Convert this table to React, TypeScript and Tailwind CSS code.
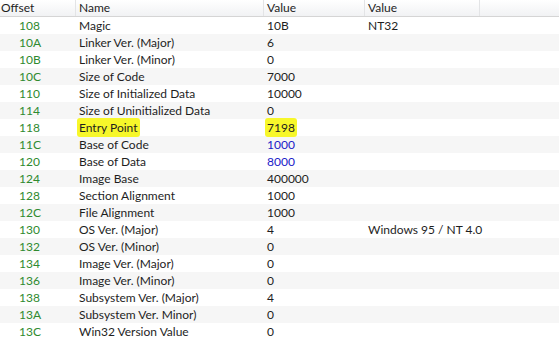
import React from "react";

type Row = { off: string; name: string; value: string; extra?: string; blue?: boolean; mark?: boolean };

const rows: Row[] = [
  { off: "108", name: "Magic", value: "10B", extra: "NT32" },
  { off: "10A", name: "Linker Ver. (Major)", value: "6" },
  { off: "10B", name: "Linker Ver. (Minor)", value: "0" },
  { off: "10C", name: "Size of Code", value: "7000" },
  { off: "110", name: "Size of Initialized Data", value: "10000" },
  { off: "114", name: "Size of Uninitialized Data", value: "0" },
  { off: "118", name: "Entry Point", value: "7198", mark: true },
  { off: "11C", name: "Base of Code", value: "1000", blue: true },
  { off: "120", name: "Base of Data", value: "8000", blue: true },
  { off: "124", name: "Image Base", value: "400000" },
  { off: "128", name: "Section Alignment", value: "1000" },
  { off: "12C", name: "File Alignment", value: "1000" },
  { off: "130", name: "OS Ver. (Major)", value: "4", extra: "Windows 95 / NT 4.0" },
  { off: "132", name: "OS Ver. (Minor)", value: "0" },
  { off: "134", name: "Image Ver. (Major)", value: "0" },
  { off: "136", name: "Image Ver. (Minor)", value: "0" },
  { off: "138", name: "Subsystem Ver. (Major)", value: "4" },
  { off: "13A", name: "Subsystem Ver. Minor)", value: "0" },
  { off: "13C", name: "Win32 Version Value", value: "0" },
];

const cols = "grid grid-cols-[76px_188px_101px_115px_1fr]";
const mark = "bg-[#f7f72a] rounded-[3px] px-[2px] -ml-[2px] py-[2px]";

export default function App() {
  return (
    <div className="w-[559px] h-[340px] overflow-hidden bg-white text-[12px] text-[#1e1e1e] font-['Lato','Open_Sans',sans-serif] leading-[16px] whitespace-nowrap">
      <div className={`${cols} h-[17px] bg-gradient-to-b from-white to-[#f1f2f4] border-b border-[#d5d5d5]`}>
        <div className="pl-[1px] leading-[15px] border-r border-[#e3e4e6]">Offset</div>
        <div className="pl-[3px] leading-[15px] border-r border-[#e3e4e6]">Name</div>
        <div className="pl-[3px] leading-[15px] border-r border-[#e3e4e6]">Value</div>
        <div className="pl-[3px] leading-[15px] border-r border-[#e3e4e6]">Value</div>
        <div />
      </div>
      {rows.map((r, i) => (
        <div key={r.off} className={`${cols} h-[17px] pt-[1px] ${i % 2 ? "bg-[#f6f6f6]" : "bg-white"}`}>
          <div className="pl-[19px] text-[#2f8a2f]">{r.off}</div>
          <div className="pl-[3px]">
            <span className={r.mark ? mark : ""}>{r.name}</span>
          </div>
          <div className={`pl-[3px] ${r.blue ? "text-[#2020c8]" : ""}`}>
            <span className={r.mark ? mark : ""}>{r.value}</span>
          </div>
          <div className="pl-[3px]">{r.extra}</div>
          <div />
        </div>
      ))}
    </div>
  );
}
